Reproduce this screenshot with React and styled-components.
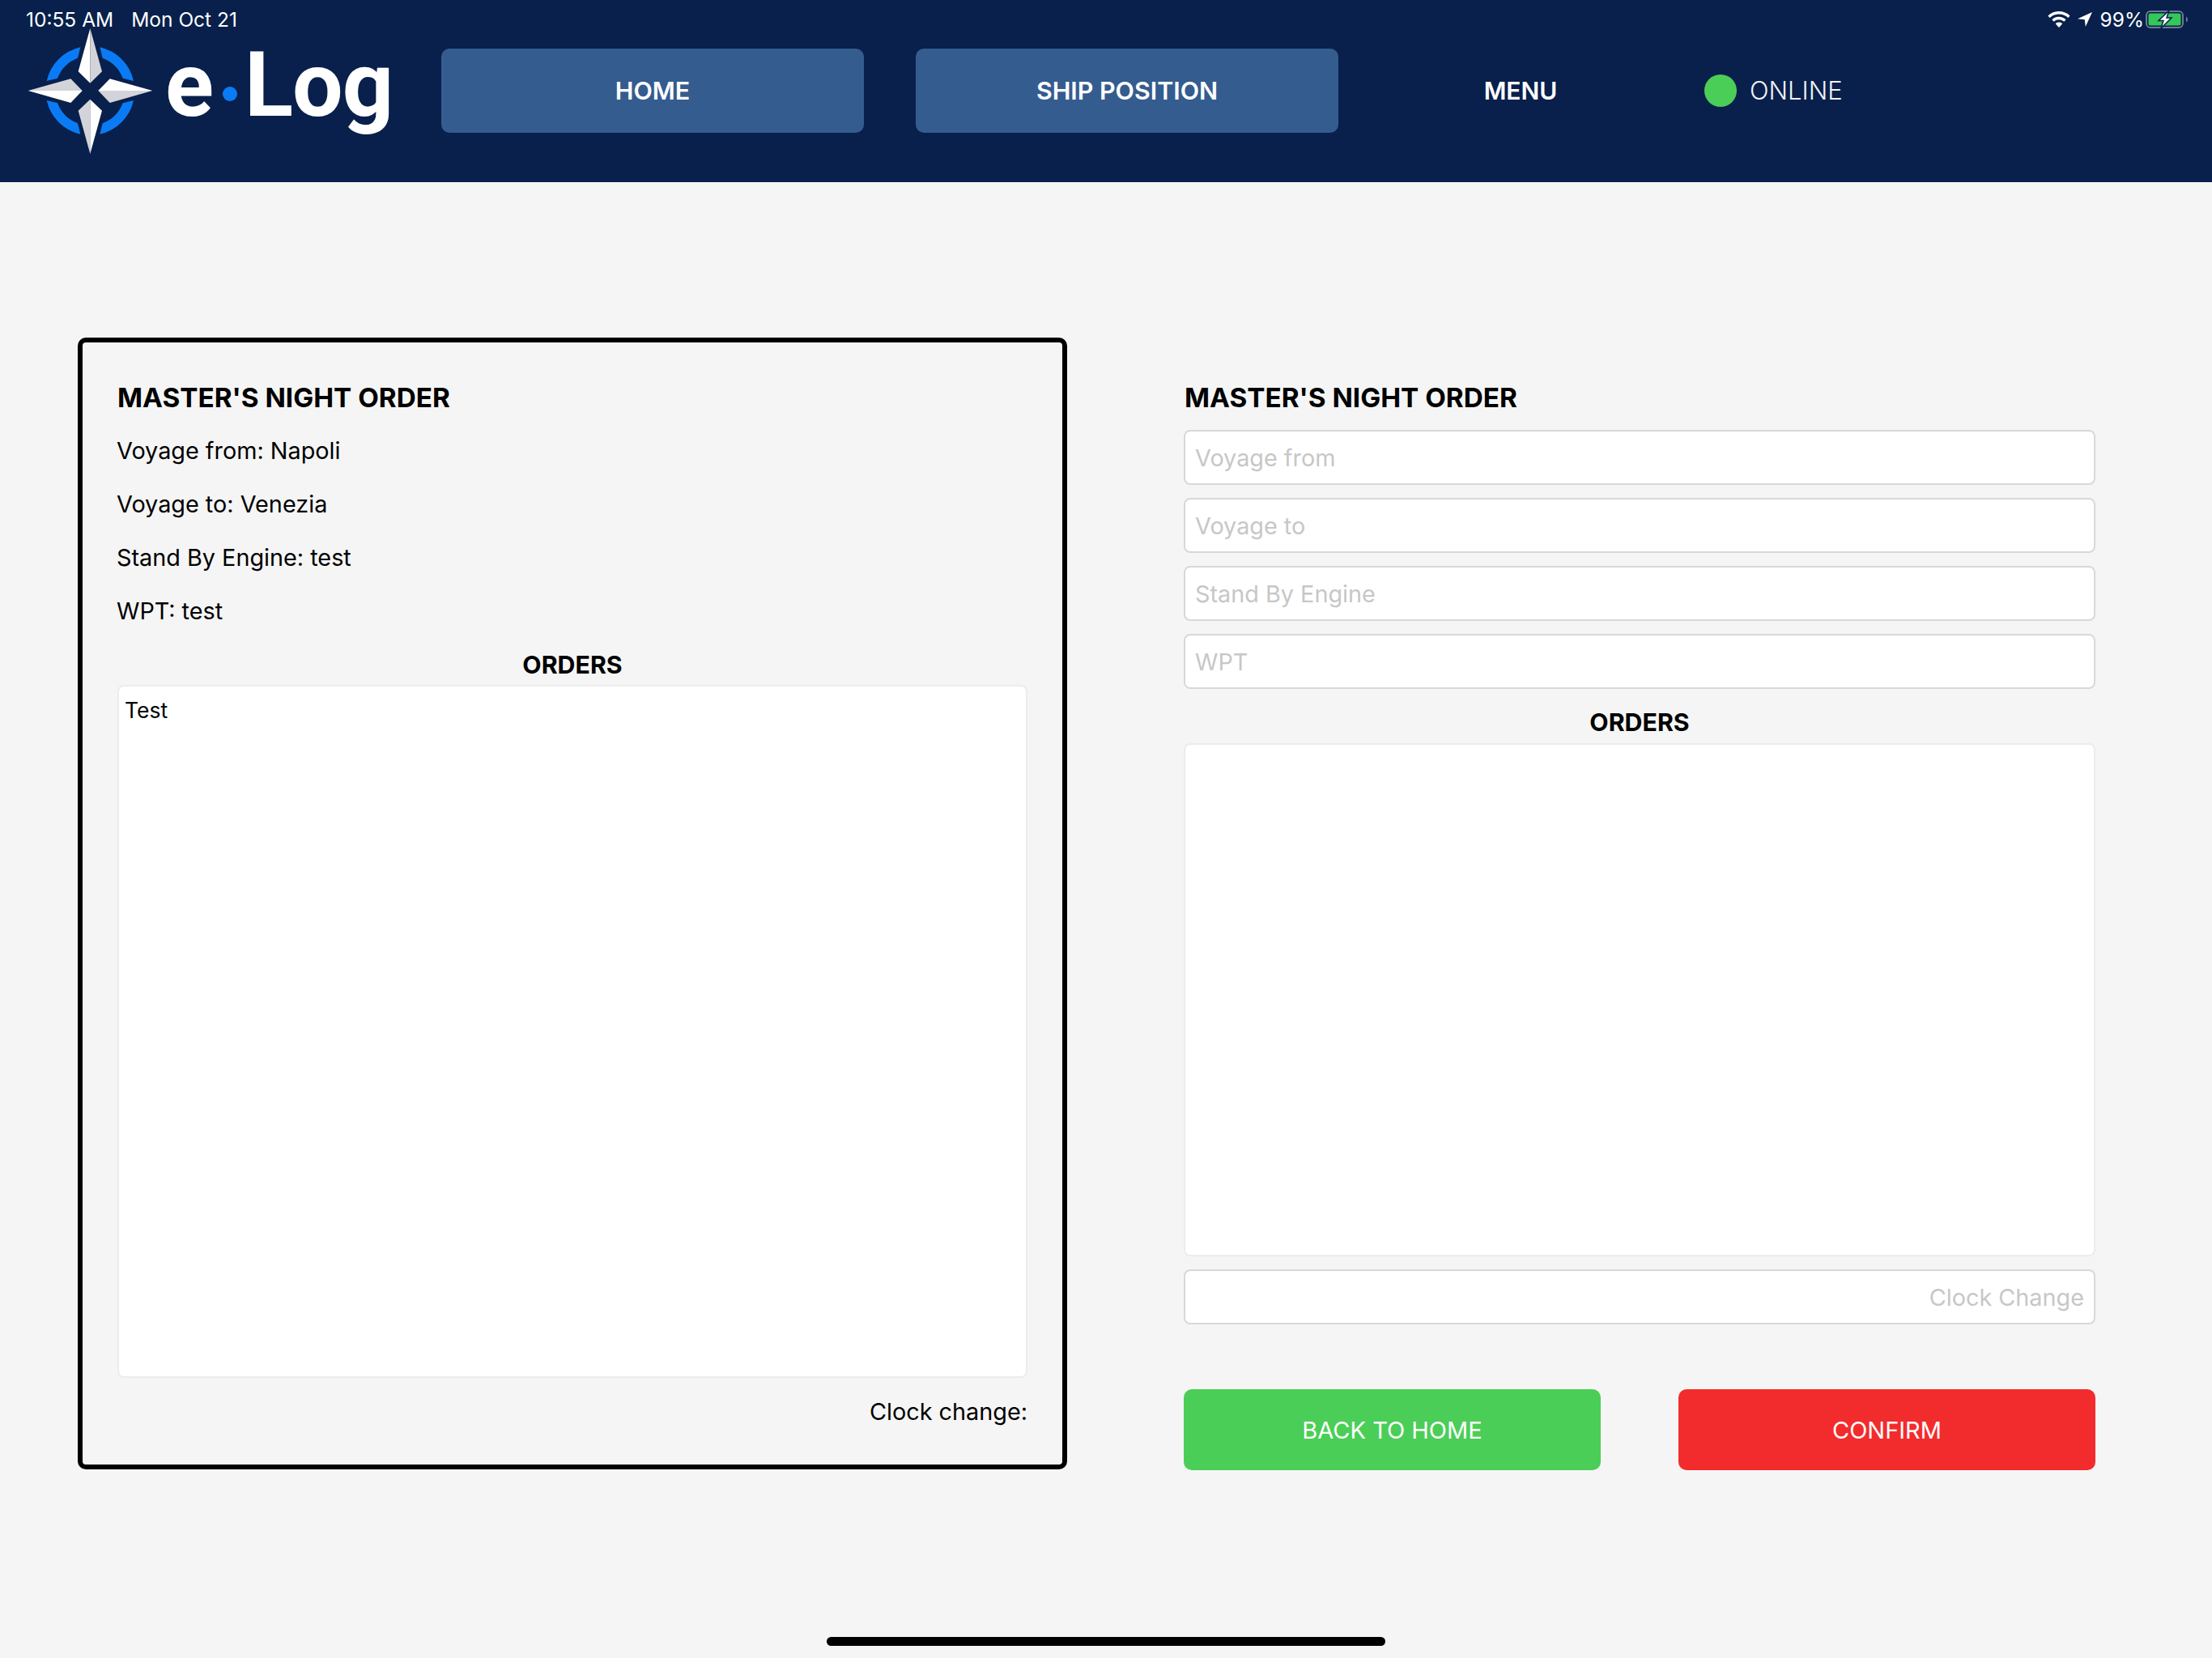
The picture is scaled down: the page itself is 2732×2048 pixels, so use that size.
import styled, { createGlobalStyle } from "styled-components";

const GlobalStyle = createGlobalStyle`
  html, body {
    margin: 0;
    padding: 0;
    background: #f5f5f5;
  }
  * {
    box-sizing: border-box;
  }
`;

const Page = styled.div`
  position: relative;
  width: 2732px;
  height: 2048px;
  overflow: hidden;
  background: #f5f5f5;
  font-family: Inter, "Liberation Sans", sans-serif;
  color: #000;
`;

const Header = styled.header`
  position: relative;
  display: flex;
  align-items: center;
  height: 225px;
  padding: 0 0 0 20px;
  background: #08204b;
`;

const StatusBar = styled.div`
  position: absolute;
  top: 10px;
  left: 32px;
  right: 30px;
  display: flex;
  justify-content: space-between;
  align-items: center;
  height: 28px;
  color: #fff;
  font-size: 24.5px;
  z-index: 2;
`;

const StatusLeft = styled.div`
  display: flex;
  gap: 22px;
`;

const StatusRight = styled.div`
  display: flex;
  align-items: center;
`;

const Percent = styled.span`
  margin: 0 2px 0 10px;
`;

const Brand = styled.div`
  display: flex;
  align-items: center;
  width: 525px;
  height: 170px;
  margin-top: 5px;
`;

const LogoText = styled.div`
  display: flex;
  align-items: center;
  margin: -20px 0 0 -6px;
  color: #fff;
  font-family: Roboto, sans-serif;
  font-weight: 700;
  font-size: 111px;
  line-height: 1;
  letter-spacing: -1px;
`;

const LogoDot = styled.span`
  width: 18px;
  height: 18px;
  margin: 22px 9px 0 12px;
  border-radius: 50%;
  background: #0a7bf5;
`;

const Nav = styled.nav`
  display: flex;
  align-items: center;
  margin-bottom: 2px;
`;

const NavButton = styled.button`
  width: 522px;
  height: 104px;
  margin-right: 64px;
  border: 0;
  border-radius: 10px;
  background: #345c8f;
  color: #fff;
  font-family: inherit;
  font-size: 30.4px;
  font-weight: 600;
`;

const MenuLink = styled.span`
  width: 258px;
  margin: 0 98px 0 32px;
  text-align: center;
  color: #fff;
  font-size: 30px;
  font-weight: 600;
`;

const Online = styled.div`
  display: flex;
  align-items: center;
  gap: 16px;
  color: #f2f2f5;
  font-size: 31px;
  font-weight: 300;
`;

const OnlineDot = styled.span`
  width: 40px;
  height: 40px;
  border-radius: 50%;
  background: #4bce57;
`;

const Main = styled.main`
  display: flex;
  align-items: flex-start;
  padding: 192px 0 0 96px;
`;

const OrderCard = styled.section`
  display: flex;
  flex-direction: column;
  width: 1222px;
  height: 1398px;
  margin-right: 144px;
  padding: 46px 43px 0 43px;
  border: 6px solid #000;
  border-radius: 10px;
`;

const Title = styled.h2`
  margin: 0;
  height: 44px;
  font-size: 33.3px;
  line-height: 44px;
  font-weight: 700;
`;

const InfoList = styled.div`
  margin: 11px 0 13px -1px;
`;

const InfoLine = styled.p`
  margin: 0;
  height: 66px;
  font-size: 28.8px;
  line-height: 66px;
  font-weight: 400;
`;

const OrdersLabel = styled.h3`
  margin: 0;
  height: 45px;
  text-align: center;
  font-size: 30.3px;
  line-height: 40px;
  font-weight: 700;
`;

const OrdersText = styled.div`
  height: 856px;
  padding: 12px 7px;
  background: #fff;
  border: 2px solid #ececec;
  border-radius: 8px;
  font-size: 26.5px;
  line-height: 34px;
`;

const ClockLine = styled.p`
  margin: 22px 0 0;
  text-align: right;
  font-size: 28.8px;
  line-height: 40px;
`;

const FormColumn = styled.section`
  display: flex;
  flex-direction: column;
  width: 1126px;
  padding-top: 52px;
`;

const FormTitle = styled(Title)`
  margin-left: 1px;
`;

const Field = styled.input`
  width: 100%;
  height: 68px;
  margin-top: ${(p) => p.$top || 16}px;
  padding: 0 12px;
  background: #fff;
  border: 2px solid #d8d8d8;
  border-radius: 8px;
  font-family: inherit;
  font-size: 28.8px;
  text-align: ${(p) => p.$align || "left"};
  &::placeholder {
    color: #c7c7c7;
    opacity: 1;
  }
`;

const OrdersInput = styled.textarea`
  display: block;
  width: 100%;
  height: 634px;
  padding: 14px;
  background: #fff;
  border: 2px solid #ececec;
  border-radius: 8px;
  resize: none;
  font-family: inherit;
  font-size: 26.5px;
`;

const FormLabel = styled(OrdersLabel)`
  margin-top: 21px;
  height: 46px;
`;

const Actions = styled.div`
  display: flex;
  justify-content: space-between;
  margin-top: 80px;
`;

const ActionButton = styled.button`
  width: 515px;
  height: 100px;
  border: 0;
  border-radius: 10px;
  background: ${(p) => p.$bg};
  color: #fff;
  font-family: inherit;
  font-size: 29px;
  font-weight: 400;
`;

const HomeIndicator = styled.div`
  position: absolute;
  left: 1021px;
  bottom: 15px;
  width: 690px;
  height: 11px;
  border-radius: 6px;
  background: #000;
`;

function CompassLogo() {
  const arc = "M310 85A165 165 0 0 1 435 210L395 200A129 129 0 0 0 320 125Z";
  return (
    <svg width="190" height="170" viewBox="0 0 570 510">
      {[0, 90, 180, 270].map((r) => (
        <path key={r} d={arc} fill="#0a7bf5" transform={`rotate(${r} 274 246)`} />
      ))}
      <path d="M274 15L230 175L274 218Z" fill="#fff" />
      <path d="M274 15L318 175L274 218Z" fill="#d3d4d9" />
      <path d="M274 480L230 320L274 278Z" fill="#d3d4d9" />
      <path d="M274 480L318 320L274 278Z" fill="#fff" />
      <path d="M44 246L202 202L245 246Z" fill="#d3d4d9" />
      <path d="M44 246L202 291L245 246Z" fill="#fff" />
      <path d="M505 246L347 202L304 246Z" fill="#fff" />
      <path d="M505 246L347 291L304 246Z" fill="#d3d4d9" />
    </svg>
  );
}

function StatusIcons() {
  return (
    <StatusRight>
      <svg width="28" height="20" viewBox="0 0 28 20" fill="#fff">
        <path d="M14 0C8.8 0 4 2 .4 5.4l2.3 2.5C5.7 5 9.6 3.4 14 3.4s8.3 1.6 11.3 4.5l2.3-2.5C24 2 19.2 0 14 0z" />
        <path d="M14 6.8c-3.3 0-6.300 1.300-8.600 3.400l2.400 2.500c1.600-1.500 3.800-2.500 6.200-2.500s4.600 1 6.200 2.500l2.400-2.500C20.300 8.100 17.300 6.800 14 6.800z" />
        <path d="M14 13.500c-1.700 0-3.200.7-4.300 1.700L14 20l4.300-4.800c-1.100-1-2.600-1.700-4.300-1.700z" />
      </svg>
      <svg width="18" height="18" viewBox="0 0 18 18" fill="#fff" style={{ marginLeft: 9 }}>
        <path d="M18 0L0 8.200L8.800 9.200L9.800 18Z" />
      </svg>
      <Percent>99%</Percent>
      <svg width="52" height="22" viewBox="0 0 52 22">
        <rect x="1" y="1" width="45" height="20" rx="5" fill="none" stroke="#6d7a92" strokeWidth="2" />
        <rect x="3.500" y="3.500" width="40" height="15" rx="2.500" fill="#34c759" />
        <path d="M50 7.500c1.200.5 2 1.800 2 3.500s-.8 3-2 3.500z" fill="#6d7a92" />
        <path d="M29 0L16 12.500H22L19 22L32 9H26Z" fill="#fff" stroke="#08204b" strokeWidth="1.500" />
      </svg>
    </StatusRight>
  );
}

export default function App() {
  return (
    <Page>
      <GlobalStyle />
      <Header>
        <StatusBar>
          <StatusLeft>
            <span>10:55 AM</span>
            <span>Mon Oct 21</span>
          </StatusLeft>
          <StatusIcons />
        </StatusBar>
        <Brand>
          <CompassLogo />
          <LogoText>
            e<LogoDot />Log
          </LogoText>
        </Brand>
        <Nav>
          <NavButton>HOME</NavButton>
          <NavButton>SHIP POSITION</NavButton>
          <MenuLink>MENU</MenuLink>
          <Online>
            <OnlineDot />
            ONLINE
          </Online>
        </Nav>
      </Header>
      <Main>
        <OrderCard>
          <Title>MASTER'S NIGHT ORDER</Title>
          <InfoList>
            <InfoLine>Voyage from: Napoli</InfoLine>
            <InfoLine>Voyage to: Venezia</InfoLine>
            <InfoLine>Stand By Engine: test</InfoLine>
            <InfoLine>WPT: test</InfoLine>
          </InfoList>
          <OrdersLabel>ORDERS</OrdersLabel>
          <OrdersText>Test</OrdersText>
          <ClockLine>Clock change:</ClockLine>
        </OrderCard>
        <FormColumn>
          <FormTitle>MASTER'S NIGHT ORDER</FormTitle>
          <Field $top={18} placeholder="Voyage from" />
          <Field placeholder="Voyage to" />
          <Field placeholder="Stand By Engine" />
          <Field placeholder="WPT" />
          <FormLabel>ORDERS</FormLabel>
          <OrdersInput />
          <Field $align="right" placeholder="Clock Change" />
          <Actions>
            <ActionButton $bg="#4bce57">BACK TO HOME</ActionButton>
            <ActionButton $bg="#f22c2c">CONFIRM</ActionButton>
          </Actions>
        </FormColumn>
      </Main>
      <HomeIndicator />
    </Page>
  );
}
